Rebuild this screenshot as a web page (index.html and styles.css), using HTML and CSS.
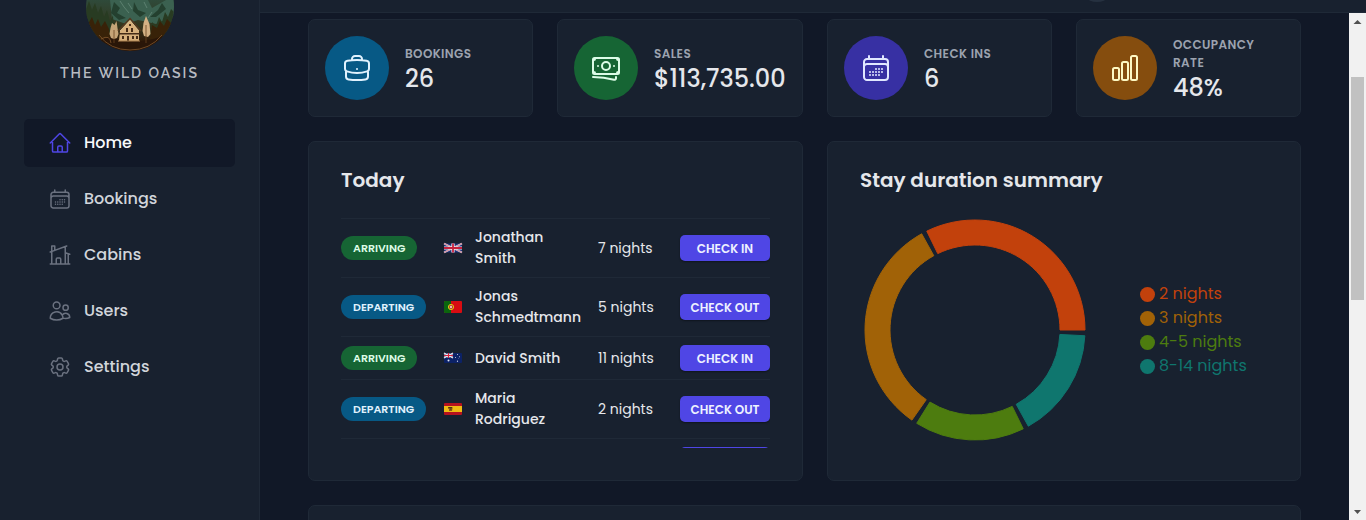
FILE: index.html
```html
<!DOCTYPE html>
<html lang="en">
<head>
<meta charset="utf-8">
<meta name="viewport" content="width=device-width, initial-scale=1">
<title>The Wild Oasis</title>
<link rel="stylesheet" href="styles.css">
</head>
<body>
<div class="app">
  <aside class="sidebar">
    <div class="logo">
      <svg class="logo-art" viewBox="0 0 88 52" aria-hidden="true">
        <defs>
          <clipPath id="disc"><circle cx="44" cy="7" r="44"/></clipPath>
          <linearGradient id="ground" x1="0" y1="0" x2="0" y2="1">
            <stop offset="0" stop-color="#2f4a3a"/>
            <stop offset=".5" stop-color="#33361d"/>
            <stop offset=".8" stop-color="#301a08"/>
            <stop offset="1" stop-color="#3a210f"/>
          </linearGradient>
        </defs>
        <g clip-path="url(#disc)">
          <rect width="88" height="52" fill="url(#ground)"/>
          <path d="M24 0H62L66 8 80 0H88V16L70 24 52 20 40 24 26 19Z" fill="#3b6150"/>
          <path d="M28 2 34 8 31 13 40 18 33 20 25 13ZM48 2 52 10 60 13 54 17 47 11ZM76 3 72 10 64 17 70 17 80 9Z" fill="#24402f"/>
          <path d="M34 1 38 7 43 13M42 3 46 9M66 12 62 18M58 2 61 8" stroke="#5d8170" stroke-width="1" fill="none"/>
          <path d="M0 10 3 1 6 10 9 3 12 13 15 6 18 17 21 10 24 22 27 15 28 36 8 36 0 20ZM88 12 85 9 82 17 79 12 76 22 73 17 70 26 66 22 64 36 82 36Z" fill="#283b22"/>
          <path d="M2 24 6 17 9 25 12 19 15 27 19 21 23 29 25 43 12 43ZM86 24 81 19 78 26 74 21 71 28 66 25 63 44 76 42Z" fill="#382208"/>
          <path d="M13 41Q26 34 34 41Q54 44 77 36L68 52H22Z" fill="#2a1608"/>
          <path d="M15 39Q24 34 25 43M13 35Q24 50 44 50T76 35" stroke="#81572d" stroke-width=".8" fill="none"/>
          <path d="M26 23 24.500 28 23.500 34 25 38 28 39 31 38 32.500 34 31.500 28 30.500 21 28.500 25Z" fill="#c5a477"/>
          <path d="M60 16 57.500 23 56.500 31 58 36 62 37 64.500 34 63.500 24Z" fill="#d3b183"/>
          <path d="M28 30V43M60 25V43" stroke="#694422" stroke-width=".8"/>
          <path d="M34 31 44 20 53 31V41H33Z" fill="#d7b07b"/>
          <path d="M32 31 44 18.500 55 31" fill="none" stroke="#53371e" stroke-width="1.400"/>
          <path d="M34 31 44 20.500 53 31" fill="none" stroke="#e2c697" stroke-width=".8"/>
          <path d="M33 33H54V34.500H33ZM40 28h2v4h-2zm3-4h2v2h-2zm2 4h2v4h-2zM36 36h2v3h-2zm5 0h2v5h-2zm5 0h2v3h-2zm4 0h2v3h-2z" fill="#462c16"/>
          <path d="M32 41H54" stroke="#ad8252" stroke-width="1"/>
        </g>
      </svg>
      <span class="logo-name">THE WILD OASIS</span>
    </div>
    <nav class="nav" aria-label="Main">
      <a class="nav-link active" href="#home"><svg class="icon" viewBox="0 0 24 24"><path d="m2.25 12 8.954-8.955c.44-.439 1.152-.439 1.591 0L21.75 12M4.5 9.75v10.125c0 .621.504 1.125 1.125 1.125H9.75v-4.875c0-.621.504-1.125 1.125-1.125h2.25c.621 0 1.125.504 1.125 1.125V21h4.125c.621 0 1.125-.504 1.125-1.125V9.75M8.25 21h8.25"/></svg>Home</a>
      <a class="nav-link" href="#bookings"><svg class="icon" viewBox="0 0 24 24"><path id="calendar" d="M6.75 3v2.25M17.25 3v2.25M3 18.75V7.5a2.25 2.25 0 0 1 2.25-2.25h13.5A2.25 2.25 0 0 1 21 7.5v11.25m-18 0A2.25 2.25 0 0 0 5.25 21h13.5A2.25 2.25 0 0 0 21 18.75m-18 0v-7.5A2.25 2.25 0 0 1 5.25 9h13.5A2.25 2.25 0 0 1 21 11.25v7.5m-9-6h.008v.008H12v-.008ZM12 15h.008v.008H12V15Zm0 2.25h.008v.008H12v-.008ZM9.75 15h.008v.008H9.75V15Zm0 2.25h.008v.008H9.75v-.008ZM7.5 15h.008v.008H7.5V15Zm0 2.25h.008v.008H7.5v-.008Zm6.75-4.5h.008v.008h-.008v-.008Zm0 2.25h.008v.008h-.008V15Zm0 2.25h.008v.008h-.008v-.008Zm2.25-4.5h.008v.008H16.5v-.008Zm0 2.25h.008v.008H16.5V15Z"/></svg>Bookings</a>
      <a class="nav-link" href="#cabins"><svg class="icon" viewBox="0 0 24 24"><path d="M8.25 21v-4.875c0-.621.504-1.125 1.125-1.125h2.25c.621 0 1.125.504 1.125 1.125V21m0 0h4.5V3.545M12.75 21h7.5V10.75M2.25 21h1.5m18 0h-18M2.25 9l4.5-1.636M18.75 3l-1.5.545m0 6.205 3 1m1.5.5-1.5-.5M6.75 7.364V3h-3v18m3-13.636 10.5-3.819"/></svg>Cabins</a>
      <a class="nav-link" href="#users"><svg class="icon" viewBox="0 0 24 24"><path d="M15 19.128a9.38 9.38 0 0 0 2.625.372 9.337 9.337 0 0 0 4.121-.952 4.125 4.125 0 0 0-7.533-2.493M15 19.128v-.003c0-1.113-.285-2.16-.786-3.07M15 19.128v.106A12.318 12.318 0 0 1 8.624 21c-2.331 0-4.512-.645-6.374-1.766l-.001-.109a6.375 6.375 0 0 1 11.964-3.07M12 6.375a3.375 3.375 0 1 1-6.75 0 3.375 3.375 0 0 1 6.75 0Zm8.25 2.25a2.625 2.625 0 1 1-5.25 0 2.625 2.625 0 0 1 5.25 0Z"/></svg>Users</a>
      <a class="nav-link" href="#settings"><svg class="icon" viewBox="0 0 24 24"><path d="M9.594 3.94c.09-.542.56-.94 1.11-.94h2.593c.55 0 1.02.398 1.11.94l.213 1.281c.063.374.313.686.645.87.074.04.147.083.22.127.325.196.72.257 1.075.124l1.217-.456a1.125 1.125 0 0 1 1.37.49l1.296 2.247a1.125 1.125 0 0 1-.26 1.431l-1.003.827c-.293.241-.438.613-.43.992a7.723 7.723 0 0 1 0 .255c-.008.378.137.75.43.991l1.004.827c.424.35.534.955.26 1.43l-1.298 2.247a1.125 1.125 0 0 1-1.369.491l-1.217-.456c-.355-.133-.75-.072-1.076.124a6.47 6.47 0 0 1-.22.128c-.331.183-.581.495-.644.869l-.213 1.281c-.09.543-.56.94-1.11.94h-2.594c-.55 0-1.019-.398-1.11-.94l-.213-1.281c-.062-.374-.312-.686-.644-.87a6.52 6.52 0 0 1-.22-.127c-.325-.196-.72-.257-1.076-.124l-1.217.456a1.125 1.125 0 0 1-1.369-.49l-1.297-2.247a1.125 1.125 0 0 1 .26-1.431l1.004-.827c.292-.24.437-.613.43-.991a6.932 6.932 0 0 1 0-.255c.007-.38-.138-.751-.43-.992l-1.004-.827a1.125 1.125 0 0 1-.26-1.43l1.297-2.247a1.125 1.125 0 0 1 1.37-.491l1.216.456c.356.133.751.072 1.076-.124.072-.044.146-.086.22-.128.332-.183.582-.495.644-.869l.214-1.28ZM15 12a3 3 0 1 1-6 0 3 3 0 0 1 6 0Z"/></svg>Settings</a>
    </nav>
  </aside>

  <div class="page">
    <header class="topbar"><svg class="avatar" viewBox="0 0 36 36" aria-hidden="true"><circle cx="18" cy="18" r="18"/></svg></header>
    <div class="scroll-area">
      <main class="dashboard">
        <section class="card stat">
          <div class="stat-icon blue"><svg class="icon" viewBox="0 0 24 24"><path d="M20.25 14.15v4.25c0 1.094-.787 2.036-1.872 2.18-2.087.277-4.216.42-6.378.42s-4.291-.143-6.378-.42c-1.085-.144-1.872-1.086-1.872-2.18v-4.25m16.5 0a2.18 2.18 0 0 0 .75-1.661V8.706c0-1.081-.768-2.015-1.837-2.175a48.114 48.114 0 0 0-3.413-.387m4.5 8.006c-.194.165-.42.295-.673.38A23.978 23.978 0 0 1 12 15.75c-2.648 0-5.195-.429-7.577-1.22a2.016 2.016 0 0 1-.673-.38m0 0A2.18 2.18 0 0 1 3 12.489V8.706c0-1.081.768-2.015 1.837-2.175a48.111 48.111 0 0 1 3.413-.387m7.5 0V5.25A2.25 2.25 0 0 0 13.5 3h-3a2.25 2.25 0 0 0-2.25 2.25v.894m7.5 0a48.667 48.667 0 0 0-7.5 0M12 12.75h.008v.008H12v-.008Z"/></svg></div>
          <div class="stat-text"><h2 class="stat-label">Bookings</h2><p class="stat-value">26</p></div>
        </section>
        <section class="card stat">
          <div class="stat-icon green"><svg class="icon" viewBox="0 0 24 24"><path d="M2.25 18.75a60.07 60.07 0 0 1 15.797 2.101c.727.198 1.453-.342 1.453-1.096V18.75M3.75 4.5v.75A.75.75 0 0 1 3 6h-.75m0 0v-.375c0-.621.504-1.125 1.125-1.125H20.25M2.25 6v9m18-10.5v.75c0 .414.336.75.75.75h.75m-1.5-1.5h.375c.621 0 1.125.504 1.125 1.125v9.75c0 .621-.504 1.125-1.125 1.125h-.375m1.5-1.5H21a.75.75 0 0 0-.75.75v.75m0 0H3.75m0 0h-.375a1.125 1.125 0 0 1-1.125-1.125V15m1.5 1.5v-.75A.75.75 0 0 0 3 15h-.75M15 10.5a3 3 0 1 1-6 0 3 3 0 0 1 6 0Zm3 0h.008v.008H18V10.5Zm-12 0h.008v.008H6V10.5Z"/></svg></div>
          <div class="stat-text"><h2 class="stat-label">Sales</h2><p class="stat-value">$113,735.00</p></div>
        </section>
        <section class="card stat">
          <div class="stat-icon indigo"><svg class="icon" viewBox="0 0 24 24"><use href="#calendar"/></svg></div>
          <div class="stat-text"><h2 class="stat-label">Check ins</h2><p class="stat-value">6</p></div>
        </section>
        <section class="card stat">
          <div class="stat-icon yellow"><svg class="icon" viewBox="0 0 24 24"><path d="M3 13.125C3 12.504 3.504 12 4.125 12h2.25c.621 0 1.125.504 1.125 1.125v6.75C7.5 20.496 6.996 21 6.375 21h-2.25A1.125 1.125 0 0 1 3 19.875v-6.75ZM9.75 8.625c0-.621.504-1.125 1.125-1.125h2.25c.621 0 1.125.504 1.125 1.125v11.25c0 .621-.504 1.125-1.125 1.125h-2.25a1.125 1.125 0 0 1-1.125-1.125V8.625ZM16.5 4.125c0-.621.504-1.125 1.125-1.125h2.25C20.496 3 21 3.504 21 4.125v15.75c0 .621-.504 1.125-1.125 1.125h-2.25a1.125 1.125 0 0 1-1.125-1.125V4.125Z"/></svg></div>
          <div class="stat-text"><h2 class="stat-label">Occupancy rate</h2><p class="stat-value">48%</p></div>
        </section>

        <section class="card panel">
          <h2 class="panel-title">Today</h2>
          <ul class="stays">
            <li class="stay">
              <span class="tag green">Arriving</span>
              <svg class="flag" viewBox="0 0 20 12" role="img" aria-label="Flag of the United Kingdom"><rect x="1" y="1.500" width="18" height="9" fill="#1d2f77"/><path d="M1 1.500 19 10.500M19 1.500 1 10.500" stroke="#e8e8ef" stroke-width="1.800"/><path d="M1 1.500 19 10.500M19 1.500 1 10.500" stroke="#c8324a" stroke-width=".6"/><path d="M10 1.500V10.500M1 6H19" stroke="#f1f1f5" stroke-width="3.200"/><path d="M10 1.500V10.500M1 6H19" stroke="#c8203c" stroke-width="1.800"/></svg>
              <span class="guest">Jonathan Smith</span>
              <span>7 nights</span>
              <button class="btn" type="button">Check in</button>
            </li>
            <li class="stay">
              <span class="tag blue">Departing</span>
              <svg class="flag" viewBox="0 0 20 12" role="img" aria-label="Flag of Portugal"><rect x="1" width="18" height="12" rx="1" fill="#d80c12"/><path d="M2 0H8V12H2Q1 12 1 11V1Q1 0 2 0Z" fill="#0b650e"/><circle cx="8" cy="6" r="2.6" fill="#8c5411" stroke="#eadb16" stroke-width=".9"/><path d="M6.8 4.6H9.2V6.8L8 7.8 6.8 6.8Z" fill="#e9e9ef" stroke="#d80c12" stroke-width=".6"/></svg>
              <span class="guest">Jonas Schmedtmann</span>
              <span>5 nights</span>
              <button class="btn" type="button">Check out</button>
            </li>
            <li class="stay">
              <span class="tag green">Arriving</span>
              <svg class="flag" viewBox="0 0 20 12" role="img" aria-label="Flag of Australia"><rect x="1" y="1" width="18" height="10" rx="1" fill="#0c2266"/><path d="M1 1 10 6M10 1 1 6" stroke="#e8e8ef" stroke-width="1.4"/><path d="M5.500 1V6M1 3.500H10" stroke="#f1f1f5" stroke-width="1.800"/><path d="M5.500 1V6M1 3.500H10" stroke="#d2203c" stroke-width="1"/><g fill="#dfe3f3"><circle cx="5.500" cy="8.600" r="1"/><circle cx="14.500" cy="2.500" r=".5"/><circle cx="12.500" cy="5.500" r=".5"/><circle cx="16.500" cy="4.800" r=".5"/><circle cx="14.500" cy="9.200" r=".6"/><circle cx="15.300" cy="6.500" r=".3"/></g></svg>
              <span class="guest">David Smith</span>
              <span>11 nights</span>
              <button class="btn" type="button">Check in</button>
            </li>
            <li class="stay">
              <span class="tag blue">Departing</span>
              <svg class="flag" viewBox="0 0 20 12" role="img" aria-label="Flag of Spain"><rect x="1" width="18" height="12" rx="1" fill="#b5121f"/><rect x="1" y="3" width="18" height="6" fill="#eebb13"/><path d="M5 4H9.500V5.500L9 8H6V6L5 5.500Z" fill="#8d5a16"/><path d="M5.500 4.500H9M7 6H8.500" stroke="#3f2a12" stroke-width=".8"/></svg>
              <span class="guest">Maria Rodriguez</span>
              <span>2 nights</span>
              <button class="btn" type="button">Check out</button>
            </li>
            <li class="stay">
              <button class="btn last" type="button" aria-label="Check in"></button>
            </li>
          </ul>
        </section>

        <section class="card panel">
          <h2 class="panel-title">Stay duration summary</h2>
          <div class="chart">
            <svg class="donut" viewBox="-112 -112 224 224" role="img" aria-label="Stay durations">
              <path class="c-orange" d="M110 0A110 110 0 0 0 -48.22 -98.87L-37.26 -76.4A85 85 0 0 1 85 0Z"/>
              <path class="c-amber" d="M-53.33 -96.21A110 110 0 0 0 -63.09 90.11L-48.75 69.63A85 85 0 0 1 -41.21 -74.34Z"/>
              <path class="c-lime" d="M-58.29 93.29A110 110 0 0 0 48.22 98.87L37.26 76.4A85 85 0 0 1 -45.04 72.08Z"/>
              <path class="c-teal" d="M53.33 96.21A110 110 0 0 0 109.85 5.76L84.88 4.45A85 85 0 0 1 41.21 74.34Z"/>
            </svg>
            <ul class="legend">
              <li class="c-orange">2 nights</li>
              <li class="c-amber">3 nights</li>
              <li class="c-lime">4-5 nights</li>
              <li class="c-teal">8-14 nights</li>
            </ul>
          </div>
        </section>

        <section class="card sales" aria-label="Sales"></section>
      </main>
      <div class="scrollbar" aria-hidden="true">
        <svg class="arrow" viewBox="0 0 17 17"><path d="M4.500 11 8.500 7 12.500 11Z"/></svg>
        <div class="track"><div class="thumb"></div></div>
        <svg class="arrow" viewBox="0 0 17 17"><path d="M5 7 8.500 11 12 7Z"/></svg>
      </div>
    </div>
  </div>
</div>
</body>
</html>
```
FILE: styles.css
```css
* { box-sizing: border-box; margin: 0; padding: 0; }

:root {
  --surface: #18212f;
  --page: #111827;
  --line: #1f2937;
  --text: #e5e7eb;
}

body {
  font: 14px/21px Poppins, Inter, "Open Sans", sans-serif;
  color: var(--text);
  background: var(--surface);
}

ul { list-style: none; }

.app {
  display: grid;
  grid-template-columns: 260px minmax(0, 1fr);
  height: 100vh;
  overflow: hidden;
}

/* Sidebar */
.sidebar {
  padding: 0 24px;
  border-right: 1px solid var(--line);
  background: var(--surface);
}
.logo {
  display: flex;
  flex-direction: column;
  align-items: center;
  gap: 11px;
  margin-bottom: 36px;
}
.logo-art { display: block; width: 88px; height: 52px; }
.logo-name {
  font: 600 14px/20px Raleway, Lato, sans-serif;
  letter-spacing: 2px;
  color: #b7bbc2;
}
.nav { display: flex; flex-direction: column; gap: 8px; }
.nav-link {
  display: flex;
  align-items: center;
  gap: 12px;
  padding: 12px 24px;
  border-radius: 5px;
  font-size: 16px;
  font-weight: 500;
  line-height: 24px;
  color: #d1d5db;
  text-decoration: none;
}
.nav-link .icon { width: 24px; height: 24px; color: #6b7280; }
.nav-link.active { background: var(--page); color: #f9fafb; }
.nav-link.active .icon { color: #4f46e5; }

.icon {
  flex: none;
  fill: none;
  stroke: currentColor;
  stroke-width: 1.5;
  stroke-linecap: round;
  stroke-linejoin: round;
}

/* Page frame */
.page {
  display: grid;
  grid-template-rows: 13px minmax(0, 1fr);
  min-height: 0;
}
.topbar {
  display: flex;
  align-items: flex-start;
  justify-content: flex-end;
  padding-right: 251px;
  border-bottom: 1px solid var(--line);
  overflow: hidden;
}
.avatar { width: 36px; height: 36px; margin-top: -34px; fill: #263140; }
.scroll-area {
  display: grid;
  grid-template-columns: minmax(0, 1fr) 17px;
  min-height: 0;
}
.scrollbar { display: flex; flex-direction: column; background: #f1f1f1; }
.arrow { width: 17px; height: 17px; fill: #505050; }
.track { flex: 1; padding: 47px 2px 0; }
.thumb { height: 223px; background: #c1c1c1; }

/* Dashboard */
.dashboard {
  display: grid;
  grid-template-columns: 225fr 246fr 225fr 225fr;
  grid-template-rows: auto auto auto;
  gap: 24px;
  padding: 6px 48px 0;
  background: var(--page);
  overflow: hidden;
}
.card {
  min-width: 0;
  border: 1px solid var(--line);
  border-radius: 7px;
  background: var(--surface);
}

.stat { display: flex; align-items: center; gap: 16px; padding: 16px; }
.stat-icon {
  display: flex;
  flex: none;
  align-items: center;
  justify-content: center;
  width: 64px;
  height: 64px;
  border-radius: 50%;
}
.stat-icon .icon { width: 32px; height: 32px; }
.stat-label {
  margin-bottom: 4px;
  font-size: 12px;
  font-weight: 600;
  line-height: 18px;
  letter-spacing: 0.4px;
  text-transform: uppercase;
  color: #9ca3af;
}
.stat-value { font-size: 24px; font-weight: 500; line-height: 24px; }

.blue { background: #075985; color: #e0f2fe; }
.green { background: #166534; color: #dcfce7; }
.indigo { background: #3730a3; color: #e0e7ff; }
.yellow { background: #854d0e; color: #fef9c3; }

.panel { grid-column: span 2; padding: 24px 32px 32px; }
.panel-title {
  margin-bottom: 24px;
  font-size: 20px;
  font-weight: 600;
  line-height: 28px;
}

.stays {
  height: 230px;
  border-top: 1px solid var(--line);
  overflow: hidden;
}
.stay {
  display: grid;
  grid-template-columns: 90px 20px minmax(0, 1fr) 70px 90px;
  gap: 12px;
  align-items: center;
  padding: 8px 0;
  border-bottom: 1px solid var(--line);
}
.guest { font-weight: 500; }
.flag { width: 20px; height: 12px; }
.tag {
  justify-self: start;
  padding: 4px 12px;
  border-radius: 12px;
  font-size: 11px;
  font-weight: 600;
  line-height: 16px;
  text-transform: uppercase;
}
.btn {
  height: 26px;
  border: 0;
  border-radius: 5px;
  background: #4f46e5;
  box-shadow: 0 1px 2px rgb(0 0 0 / 40%);
  color: #eef2ff;
  font: inherit;
  font-size: 12px;
  font-weight: 600;
  text-transform: uppercase;
}
.btn.last { grid-column: 5; }

.chart { display: flex; align-items: center; gap: 53px; padding-left: 3px; }
.donut { display: block; flex: none; width: 224px; height: 224px; }
.donut path { fill: currentColor; stroke: currentColor; }
.legend { font-size: 16px; line-height: 24px; }
.legend li { display: flex; align-items: center; gap: 4px; white-space: nowrap; }
.legend li::before {
  content: "";
  width: 15px;
  height: 15px;
  border-radius: 50%;
  background: currentColor;
}
.c-orange { color: #c2410c; }
.c-amber { color: #a16207; }
.c-lime { color: #4d7c0f; }
.c-teal { color: #0f766e; }

.sales { grid-column: 1 / -1; min-height: 320px; }
```
